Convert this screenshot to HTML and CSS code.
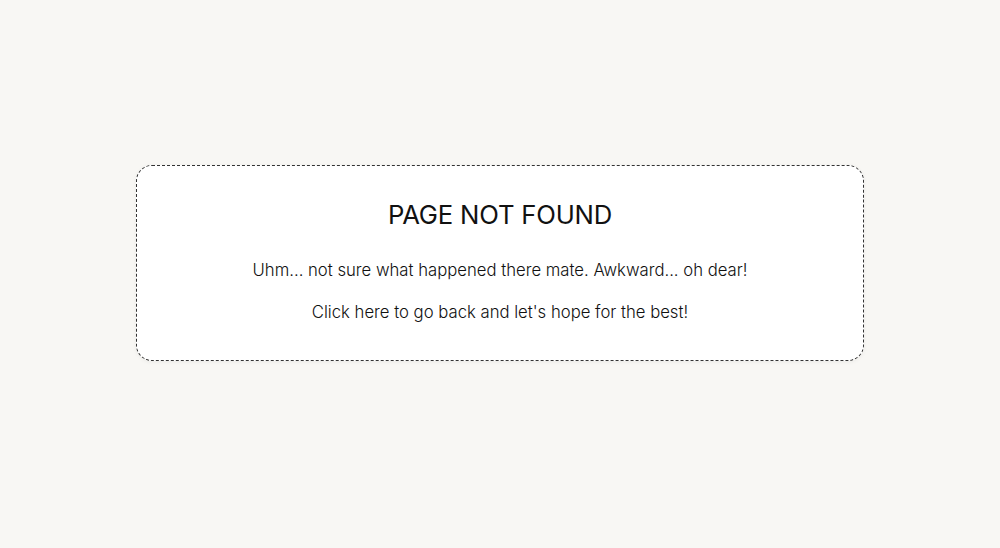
FILE: index.html
```html
<!DOCTYPE html>
<html lang="en">
<head>
<meta charset="utf-8">
<title>Page not found</title>
<link rel="stylesheet" href="styles.css">
</head>
<body>
<main class="page">
  <section class="card">
    <h1 class="title">PAGE NOT FOUND</h1>
    <p class="text">Uhm... not sure what happened there mate. Awkward... oh dear!</p>
    <p class="text"><a class="link" href="#">Click here to go back and let's hope for the best!</a></p>
  </section>
</main>
</body>
</html>
```
FILE: styles.css
```css
html, body {
  margin: 0;
  padding: 0;
}
body {
  background: #f8f7f4;
  font-family: "Inter", "Liberation Sans", sans-serif;
  color: #111111;
  height: 548px;
}
.page {
  display: flex;
  justify-content: center;
  padding-top: 165px;
}
.card {
  box-sizing: border-box;
  width: 728px;
  height: 196px;
  background: #ffffff;
  border: 1px dashed #333;
  border-radius: 16px;
  box-shadow: 0 1px 4px rgba(0,0,0,0.06);
  display: flex;
  flex-direction: column;
  align-items: center;
  padding-top: 34px;
}
.title {
  margin: 0 0 28px;
  font-size: 25.7px;
  font-weight: 400;
  line-height: 30px;
  letter-spacing: -0.2px;
  color: #111;
}
.text {
  margin: 0 0 18px;
  font-size: 16.7px;
  font-weight: 300;
  line-height: 24px;
  color: #111;
}
.link {
  color: inherit;
  text-decoration: none;
}
```
